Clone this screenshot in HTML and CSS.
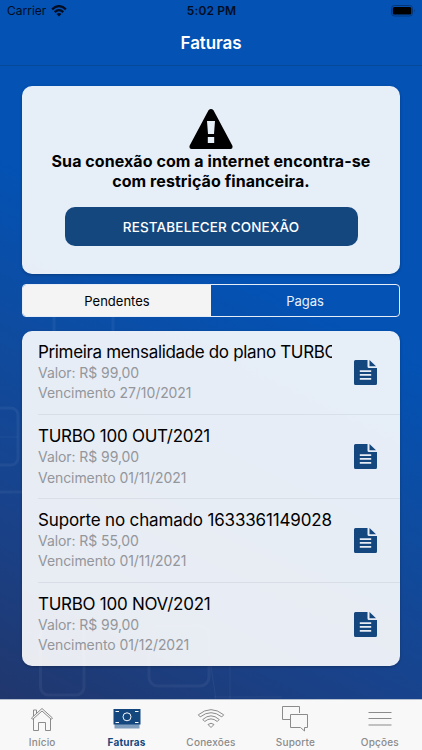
FILE: index.html
```html
<!DOCTYPE html>
<html lang="pt-BR">
<head>
  <meta charset="UTF-8" />
  <meta name="viewport" content="width=device-width, initial-scale=1.0" />
  <title>Faturas</title>
  <link rel="stylesheet" href="styles.css">
</head>
<body>
  <!-- Icon shared by the invoice rows -->
  <svg width="0" height="0" class="sprite">
    <symbol id="doc" viewBox="0 0 23 25">
      <path fill="#15477f" fill-rule="evenodd" d="M1.5 0H13.5V6.5Q13.5 8 15 8H23V23.5Q23 25 21.5 25H1.5Q0 25 0 23.5V1.5Q0 0 1.5 0ZM5.8 10.2V12H17.2V10.2ZM5.8 14V15.8H17.2V14ZM5.8 17.9V19.7H17.2V17.9Z" />
      <path fill="#15477f" d="M15.500 0L22 6.300H15.500Z" />
    </symbol>
  </svg>

  <div class="app">
    <svg class="pattern" width="422" height="700" viewBox="0 0 422 700">
      <rect x="-30" y="408" width="48" height="57" rx="7" />
      <rect x="40.5" y="626" width="43.5" height="69" rx="8" />
      <rect x="149" y="626" width="60" height="60" rx="9" />
      <path d="M54 317V331M113 317V331M-5 492H23" />
      <path d="M0 437H18M211 666L216 700M230 666V700M214 697H282" stroke-width="1" />
    </svg>

    <header class="header">
      <div class="status-bar">
        <span class="carrier">Carrier
          <svg width="16" height="12" viewBox="0 0 16 12">
            <g fill="none" stroke="#020d24" stroke-width="2.3">
              <path d="M1.1 4.3Q8-2 14.9 4.3" />
              <path d="M3.7 7.1Q8 3.2 12.3 7.1" />
            </g>
            <path fill="#020d24" d="M5.5 9Q8 7 10.5 9L8 11.5Z" />
          </svg>
        </span>
        <span class="clock">5:02 PM</span>
        <svg class="battery" width="25" height="12" viewBox="0 0 25 12">
          <rect x=".5" y=".5" width="21" height="10.5" rx="3" fill="none" stroke="#06367a" />
          <rect x="1.8" y="2" width="18.5" height="7.5" rx="1.5" />
          <path d="M23 4Q24.5 5.8 23 7.6Z" fill="#06367a" />
        </svg>
      </div>
      <h1>Faturas</h1>
    </header>

    <main>
      <section class="card alert">
        <svg width="44" height="40" viewBox="0 0 44 40">
          <path fill-rule="evenodd" d="M19.5 1.3Q22-1.2 24.5 1.3L43.3 36.5Q44.3 40 41.5 40H2.5Q-.3 40 .7 36.5ZM18 12L19 25H25L26 12ZM18.8 28V34H25.2V28Z" />
        </svg>
        <p>Sua conexão com a internet encontra-se<br>com restrição financeira.</p>
        <button class="reconnect">RESTABELECER CONEXÃO</button>
      </section>

      <div class="segment">
        <button class="active">Pendentes</button>
        <button>Pagas</button>
      </div>

      <ul class="card invoices">
        <li>
          <div class="info">
            <h2 class="long">Primeira mensalidade do plano TURBO</h2>
            <p>Valor: R$ 99,00</p>
            <p>Vencimento 27/10/2021</p>
          </div>
          <svg class="doc"><use href="#doc" /></svg>
        </li>
        <li>
          <div class="info">
            <h2>TURBO 100 OUT/2021</h2>
            <p>Valor: R$ 99,00</p>
            <p>Vencimento 01/11/2021</p>
          </div>
          <svg class="doc"><use href="#doc" /></svg>
        </li>
        <li>
          <div class="info">
            <h2 class="ticket">Suporte no chamado 1633361149028</h2>
            <p>Valor: R$ 55,00</p>
            <p>Vencimento 01/11/2021</p>
          </div>
          <svg class="doc"><use href="#doc" /></svg>
        </li>
        <li>
          <div class="info">
            <h2>TURBO 100 NOV/2021</h2>
            <p>Valor: R$ 99,00</p>
            <p>Vencimento 01/12/2021</p>
          </div>
          <svg class="doc"><use href="#doc" /></svg>
        </li>
      </ul>
    </main>

    <nav class="tabs">
      <a>
        <svg width="28" height="28" viewBox="0 0 28 28">
          <path d="M3.500 14L14 4.500L24.500 14L23.300 15.300L14 7L4.700 15.300ZM5.500 12V6H8.500V9.300M5.500 15V26.500H10.500V18.500H17.500V26.500H22.500V15" />
        </svg>
        <span>Início</span>
      </a>
      <a class="active">
        <svg width="28" height="28" viewBox="0 0 28 28">
          <path class="shade" d="M1.5 20H26.5V24.500H1.5Z" />
          <path class="bill" d="M.5 5H27.5V20.5H.5Z" />
          <circle cx="14" cy="12.8" r="4" />
          <path class="marks" d="M2.500 7.500H6M22 7.500H25.500M2.500 18.500H6M22 18.500H25.500" />
        </svg>
        <span>Faturas</span>
      </a>
      <a>
        <svg width="28" height="28" viewBox="0 0 28 28">
          <path d="M1.300 10.800Q14 .5 26.700 10.800L24.800 12.900Q14 4.500 3.200 12.900Z" />
          <path d="M5.800 15.500Q14 8.200 22.200 15.500L20.300 17.500Q14 12.300 7.700 17.500Z" />
          <path d="M11 20.500Q14 18 17 20.500L14 23.500Z" />
        </svg>
        <span>Conexões</span>
      </a>
      <a>
        <svg width="28" height="28" viewBox="0 0 28 28">
          <path d="M9 15.500H1.500V2.500H18.500V9" />
          <path d="M9.500 10.500H26.500V23.500H23.500V27L19.500 23.500H9.500Z" />
        </svg>
        <span>Suporte</span>
      </a>
      <a>
        <svg width="28" height="28" viewBox="0 0 28 28">
          <path d="M2.500 8.500H25.500M2.500 14.500H25.500M2.500 21H25.500" />
        </svg>
        <span>Opções</span>
      </a>
    </nav>
  </div>
</body>
</html>
```
FILE: styles.css
```css
* {
  margin: 0;
  padding: 0;
  box-sizing: border-box;
  font-family: Inter, 'Liberation Sans', sans-serif;
}

body {
  height: 750px;
  overflow: hidden;
}

.sprite {
  position: absolute;
}

.app {
  position: relative;
  width: 422px;
  height: 750px;
  display: flex;
  flex-direction: column;
  background: linear-gradient(26deg, #21366b 4%, #19428a 25%, #0f4b9e 43%, #0352b4 62%);
}

/* faint outlined squares behind the cards */
.pattern {
  position: absolute;
  top: 0;
  left: 0;
  fill: none;
  stroke: rgba(255, 255, 255, 0.05);
  stroke-width: 3;
}

.header {
  position: relative;
  height: 66px;
  background: #0352b4;
  border-bottom: 1px solid #064999;
}

.status-bar {
  display: grid;
  grid-template-columns: 1fr auto 1fr;
  align-items: center;
  height: 21px;
  padding: 0 6px 0 7px;
  font-size: 12px;
  color: #020d24;
}

.carrier {
  display: flex;
  align-items: center;
  gap: 5px;
}

.clock {
  font-weight: 600;
  letter-spacing: 0.1px;
}

.battery {
  justify-self: end;
}

h1 {
  margin-top: 11px;
  line-height: 22px;
  text-align: center;
  color: #fff;
  font-size: 17px;
  font-weight: 600;
  letter-spacing: -0.1px;
}

main {
  position: relative;
  flex: 1;
  padding: 20px 22px 0;
}

.card {
  background: rgba(255, 255, 255, 0.9);
  border-radius: 10px;
  box-shadow: 0 1px 3px rgba(0, 0, 0, 0.25);
}

.alert {
  height: 188px;
  padding-top: 23px;
  display: flex;
  flex-direction: column;
  align-items: center;
}

.alert svg {
  flex: none;
}

.alert p {
  margin-top: 2px;
  line-height: 20px;
  font-size: 16px;
  font-weight: 700;
  letter-spacing: 0.07px;
  text-align: center;
  white-space: nowrap;
}

button {
  border: none;
  background: none;
}

.reconnect {
  width: 293px;
  height: 39px;
  margin-top: 16px;
  background: #15477f;
  border-radius: 10px;
  color: #fff;
  font-size: 13.5px;
  font-weight: 500;
  letter-spacing: 0.15px;
}

.segment {
  height: 33px;
  margin-top: 10px;
  display: flex;
  border: 1px solid #e6edf6;
  border-radius: 4px;
  overflow: hidden;
}

.segment button {
  flex: 1;
  font-size: 13px;
  color: #e8f0fa;
}

.segment .active {
  background: #f4f4f4;
  color: #000;
}

.invoices {
  height: 335px;
  margin-top: 13.5px;
  list-style: none;
}

.invoices li {
  display: flex;
  align-items: center;
  height: 83.8px;
  margin-left: 16px;
}

.invoices li + li {
  border-top: 1px solid #d9dfe9;
}

.info {
  width: 294px;
  overflow: hidden;
  white-space: nowrap;
}

h2 {
  line-height: 22px;
  font-size: 17px;
  font-weight: 400;
  letter-spacing: -0.27px;
}

.long {
  letter-spacing: -0.34px;
}

.ticket {
  letter-spacing: -0.16px;
}

.info p {
  line-height: 20.5px;
  font-size: 14px;
  letter-spacing: -0.07px;
  color: #93969b;
}

.doc {
  width: 23px;
  height: 25px;
  margin-left: 22px;
}

.tabs {
  position: relative;
  height: 51px;
  display: flex;
  background: #f8f8f8;
  border-top: 1px solid #b4bfd0;
}

.tabs a {
  flex: 1;
  padding-top: 4px;
  display: flex;
  flex-direction: column;
  align-items: center;
  color: #8b8b8b;
  font-size: 10px;
  font-weight: 500;
  letter-spacing: 0.2px;
}

.tabs svg {
  fill: none;
  stroke: #8b8b8b;
  stroke-width: 1;
}

.tabs span {
  margin-top: 4px;
  line-height: 12px;
}

.tabs .active {
  color: #15477f;
  font-weight: 700;
}

.tabs .active svg {
  stroke: #f8f8f8;
}

.tabs .bill {
  fill: #15477f;
  stroke: none;
}

.tabs .shade {
  fill: #7f9dbd;
  stroke: none;
}
```
